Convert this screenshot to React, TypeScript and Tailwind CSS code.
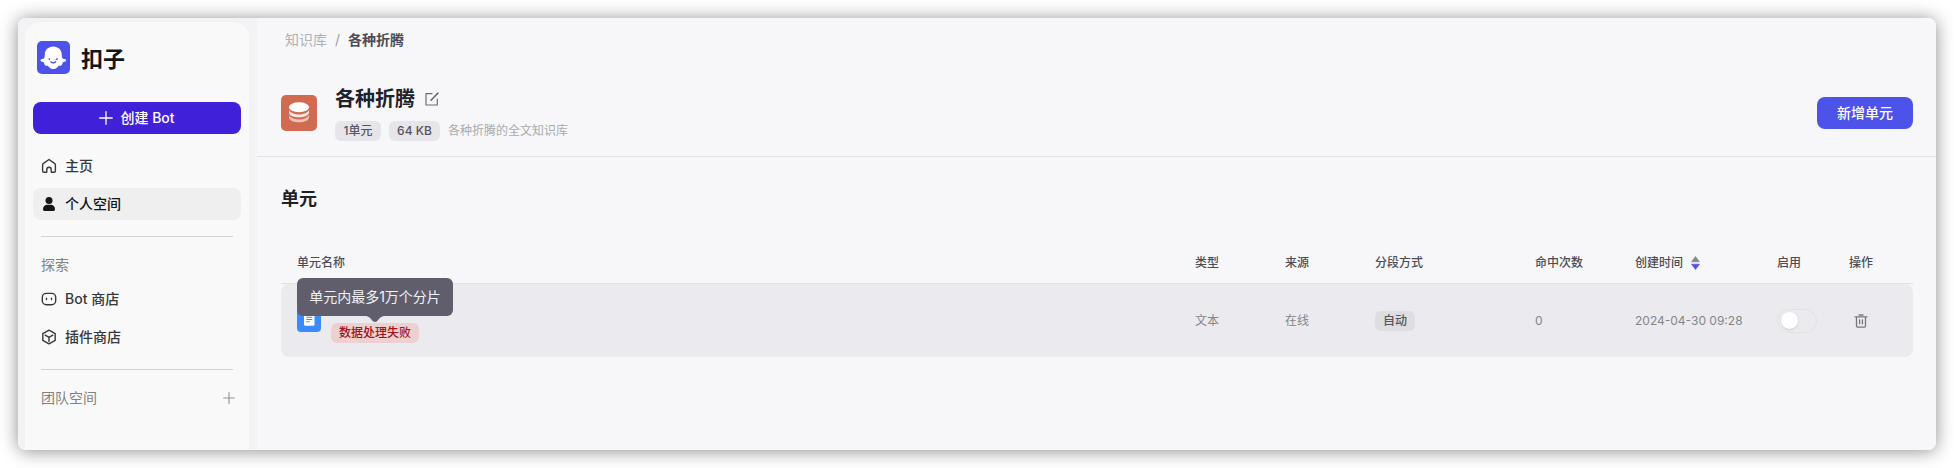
import React from "react";

type NavItemProps = { icon: React.ReactNode; label: string; active?: boolean };

const stroke = {
  fill: "none",
  stroke: "currentColor",
  strokeLinecap: "round" as const,
  strokeLinejoin: "round" as const,
};

function Logo() {
  return (
    <svg width="33" height="33" viewBox="0 0 33 33" className="shrink-0">
      <rect width="33" height="33" rx="5" fill="#4d53e8" />
      <path
        fill="#fff"
        d="M16.300 5.500c5 0 8.500 3.600 8.500 8.200 0 1.600.2 2.800.9 3.700.7.700 1.500.4 2.600.8 1.200.5 1.100 1.700 0 2.200-1.200.6-2.300.6-2.600 1-.1 1.500-.9 3-2.300 3.400-1 .2-1.500-.2-2.300.6-1.200 1.400-2.600 2.600-4.800 2.600s-3.600-1.200-4.800-2.600c-.8-.8-1.300-.4-2.300-.6-1.400-.4-2.200-1.900-2.300-3.400-.3-.4-1.400-.4-2.600-1-1.100-.5-1.200-1.700 0-2.200 1.100-.4 1.900-.1 2.600-.8.7-.9.900-2.100.9-3.700 0-4.600 3.500-8.200 8.500-8.200z"
      />
      <path {...stroke} stroke="#4d53e8" strokeWidth="1.300" d="M12.300 17.600v1M19.200 18.300l1.200-.5M13.900 20.700c1.300 1.400 3.500 1.400 4.800 0" />
    </svg>
  );
}

function HomeIcon() {
  return (
    <svg width="16" height="16" viewBox="0 0 16 16" {...stroke} strokeWidth="1.400">
      <path d="M8 1.500 2.500 5.300a2 2 0 0 0-.9 1.700v5.900c0 .8.5 1.400 1.300 1.400h2.400c.3 0 .5-.2.5-.5v-2.300a2.200 2.200 0 0 1 4.400 0v2.300c0 .3.2.5.5.5h2.400c.8 0 1.300-.6 1.300-1.400V7a2 2 0 0 0-.9-1.700z" />
    </svg>
  );
}

function UserIcon() {
  return (
    <svg width="16" height="16" viewBox="0 0 16 16" fill="currentColor">
      <circle cx="8" cy="4.500" r="3.500" />
      <path d="M2 13.200c0-3 2-4.500 4.200-4.500h3.600c2.200 0 4.200 1.500 4.200 4.500 0 1-.6 1.700-1.500 1.700h-9c-.9 0-1.500-.7-1.500-1.700z" />
    </svg>
  );
}

function BotIcon() {
  return (
    <svg width="16" height="16" viewBox="0 0 16 16" {...stroke} strokeWidth="1.400">
      <rect x="1.300" y="2.400" width="13.400" height="11.400" rx="4" />
      <path d="M5.500 7.300v1.300M10.500 7.300v1.300" />
    </svg>
  );
}

function CubeIcon() {
  return (
    <svg width="16" height="16" viewBox="0 0 16 16" {...stroke} strokeWidth="1.400">
      <path d="M8 1.200 14.200 4.600v6.800L8 14.800l-6.200-3.400V4.600zM4.200 6.200 8 8.300l3.800-2.100M8 8.300v4.300" />
    </svg>
  );
}

function PlusIcon({ size }: { size: number }) {
  return (
    <svg width={size} height={size} viewBox="0 0 14 14" {...stroke} strokeWidth="1.300">
      <path d="M7 .7v12.600M.7 7h12.600" />
    </svg>
  );
}

function DatabaseIcon() {
  return (
    <svg width="36" height="36" viewBox="0 0 36 36" className="shrink-0">
      <rect width="36" height="36" rx="5" fill="#d06a50" />
      <ellipse cx="18" cy="12.300" rx="10" ry="5" fill="#fff" />
      <path fill="#fff" opacity=".85" d="M8 15.300c2 3 6 4.200 10 4.200s8-1.200 10-4.200v2.200c0 2.700-4.500 4.800-10 4.800S8 20.200 8 17.500z" />
      <path fill="#fff" opacity=".6" d="M8 20.300c2 3 6 4.200 10 4.200s8-1.200 10-4.200v2.200c0 2.700-4.500 4.800-10 4.800S8 25.200 8 22.500z" />
    </svg>
  );
}

function EditIcon() {
  return (
    <svg width="14" height="14" viewBox="0 0 14 14" className="text-[#6b6b75]" {...stroke} strokeWidth="1.200">
      <path d="M7 1.700H1v11.300h11.300V7" />
      <path d="M6 8.200 12.900 1.100" strokeWidth="1.600" />
    </svg>
  );
}

function DocIcon() {
  return (
    <svg width="24" height="24" viewBox="0 0 24 24" className="shrink-0">
      <rect width="24" height="24" rx="4" fill="#3a8bff" />
      <rect x="7" y="5" width="10.500" height="12.800" rx="1.500" fill="#fff" />
      <path d="M9.300 9.300h6M9.300 11.500h6M9.300 13.700h3.500" stroke="#3a8bff" strokeWidth="1.100" />
    </svg>
  );
}

function TrashIcon() {
  return (
    <svg width="14" height="14" viewBox="0 0 14 14" className="text-[#77777f]" {...stroke} strokeWidth="1.300">
      <path d="M1 2.800h12M5 1h4M2.500 3v9.300a.8.8 0 0 0 .8.8h7.400a.8.8 0 0 0 .8-.8V3M5.600 6v3.800M8.400 6v3.800" />
    </svg>
  );
}

function NavItem({ icon, label, active }: NavItemProps) {
  return (
    <div
      className={
        active
          ? "flex h-8 items-center gap-2 rounded-lg bg-[#efefef] px-2 text-sm font-medium text-[#141517]"
          : "flex h-8 items-center gap-2 rounded-lg px-2 text-sm font-medium text-[#37383b]"
      }
    >
      {icon}
      <span>{label}</span>
    </div>
  );
}

function Sidebar() {
  return (
    <aside className="w-[239px] shrink-0 bg-[#f3f3f6] pt-1 pl-[7px]">
      <div className="flex h-full w-56 flex-col rounded-t-2xl bg-[#f9f9f9] px-2">
        <div className="mt-[19px] flex h-[33px] items-center gap-[11px] pl-[4px]">
          <Logo />
          <span className="pt-[2px] text-[22px] leading-8 font-bold text-[#141517]">扣子</span>
        </div>
        <div className="mt-[28px] flex h-8 items-center justify-center gap-[7px] rounded-lg bg-[#4021d9] text-sm font-medium text-white">
          <PlusIcon size={14} />
          <span>创建 Bot</span>
        </div>
        <div className="mt-4 flex flex-col gap-1.5">
          <NavItem icon={<HomeIcon />} label="主页" />
          <NavItem icon={<UserIcon />} label="个人空间" active />
        </div>
        <div className="mx-2 mt-4 h-px bg-[#d2d2d3]" />
        <div className="mt-[18px] px-2 text-sm leading-5 text-[#818181]">探索</div>
        <div className="mt-2 flex flex-col gap-1.5">
          <NavItem icon={<BotIcon />} label="Bot 商店" />
          <NavItem icon={<CubeIcon />} label="插件商店" />
        </div>
        <div className="mx-2 mt-4 h-px bg-[#d2d2d3]" />
        <div className="mt-[18px] flex items-center justify-between pr-1.5 pl-2 text-sm leading-5 text-[#818181]">
          <span>团队空间</span>
          <span className="text-[#939393]">
            <PlusIcon size={12} />
          </span>
        </div>
      </div>
    </aside>
  );
}

function Header() {
  return (
    <header className="h-[139px] border-b border-[#e3e4e7]">
      <div className="flex items-center gap-2 pt-3 pl-7 text-sm leading-5">
        <span className="text-[#b0b1b6]">知识库</span>
        <span className="text-[#9c9da3]">/</span>
        <span className="font-semibold text-[#4c4c55]">各种折腾</span>
      </div>
      <div className="mt-[35px] flex items-center pr-[23px] pl-6">
        <DatabaseIcon />
        <div className="ml-[18px]">
          <div className="flex h-7 items-center gap-2.5">
            <h1 className="text-xl leading-7 font-semibold text-[#1d222b]">各种折腾</h1>
            <EditIcon />
          </div>
          <div className="mt-2 flex h-5 items-center text-xs">
            <span className="flex h-5 w-[46px] items-center justify-center rounded-md bg-[#e6e6ea] font-medium text-[#55545f]">1单元</span>
            <span className="ml-2 flex h-5 w-[51px] items-center justify-center rounded-md bg-[#e6e6ea] font-medium text-[#55545f]">64 KB</span>
            <span className="ml-2 text-[#a9aaae]">各种折腾的全文知识库</span>
          </div>
        </div>
        <button className="ml-auto h-8 w-24 rounded-lg bg-[#4d53e8] text-sm font-medium text-white">新增单元</button>
      </div>
    </header>
  );
}

function Tooltip() {
  return (
    <div className="absolute top-[-6px] left-4 flex h-[38px] w-[156px] items-center justify-center rounded-md bg-[#605e6c] text-sm whitespace-nowrap text-[#f2f2f4]">
      单元内最多1万个分片
      <svg width="20" height="7" viewBox="0 0 20 7" className="absolute top-[37.500px] left-[68px]">
        <path d="M0 0h20c-4 0-5.500 2.500-7.500 4.800-1.500 1.700-3.500 1.700-5 0C5.500 2.500 4 0 0 0z" fill="#605e6c" />
      </svg>
    </div>
  );
}

const columns = "grid grid-cols-[914px_90px_90px_160px_100px_142px_72px_64px]";

function UnitTable() {
  return (
    <div className="w-[1632px]">
      <div className={`${columns} h-[41px] items-center border-b border-[#e1e1e5] text-xs font-medium text-[#4c4c55]`}>
        <span className="pl-4">单元名称</span>
        <span>类型</span>
        <span>来源</span>
        <span>分段方式</span>
        <span>命中次数</span>
        <span className="flex items-center gap-2">
          创建时间
          <svg width="9" height="14" viewBox="0 0 9 14">
            <path d="M4.500.5 8.500 5.800h-8z" fill="#85858e" stroke="#85858e" strokeWidth=".6" strokeLinejoin="round" />
            <path d="M.5 8.200h8l-4 5.300z" fill="#4d53e8" stroke="#4d53e8" strokeWidth=".6" strokeLinejoin="round" />
          </svg>
        </span>
        <span>启用</span>
        <span>操作</span>
      </div>
      <div className={`${columns} relative h-[73px] items-center rounded-lg bg-[#ebebef] text-xs text-[#85858b]`}>
        <div className="flex h-full pl-4">
          <div className="pt-6">
            <DocIcon />
          </div>
          <span className="mt-[39px] ml-2.5 flex h-5 w-[88px] items-center justify-center rounded-md bg-[#edd0d1] font-medium text-[#a31419]">
            数据处理失败
          </span>
        </div>
        <span>文本</span>
        <span>在线</span>
        <span className="mt-px flex h-5 w-10 items-center justify-center rounded-md bg-[#dedee2] font-medium text-[#55545f]">自动</span>
        <span>0</span>
        <span>2024-04-30 09:28</span>
        <span className="flex h-6 w-10 items-center rounded-full border border-[#e1e1e5] pl-[3px]">
          <span className="size-[17px] rounded-full bg-white shadow-sm" />
        </span>
        <span className="pl-[5px]">
          <TrashIcon />
        </span>
        <Tooltip />
      </div>
    </div>
  );
}

export default function App() {
  return (
    <div className="h-[468px] w-[1954px] overflow-hidden bg-white p-[18px] font-[Inter,'Noto_Sans_CJK_SC',sans-serif]">
      <div className="flex h-[432px] w-[1918px] rounded-lg shadow-[0_1px_18px_rgba(0,0,0,0.45)]">
        <div className="flex h-full w-full overflow-hidden rounded-lg bg-[#f7f7fa]">
          <Sidebar />
          <main className="min-w-0 flex-1">
            <Header />
            <section className="pl-6">
              <h2 className="pt-[28px] text-lg leading-7 font-semibold text-[#1f2128]">单元</h2>
              <div className="mt-[30px]">
                <UnitTable />
              </div>
            </section>
          </main>
        </div>
      </div>
    </div>
  );
}
